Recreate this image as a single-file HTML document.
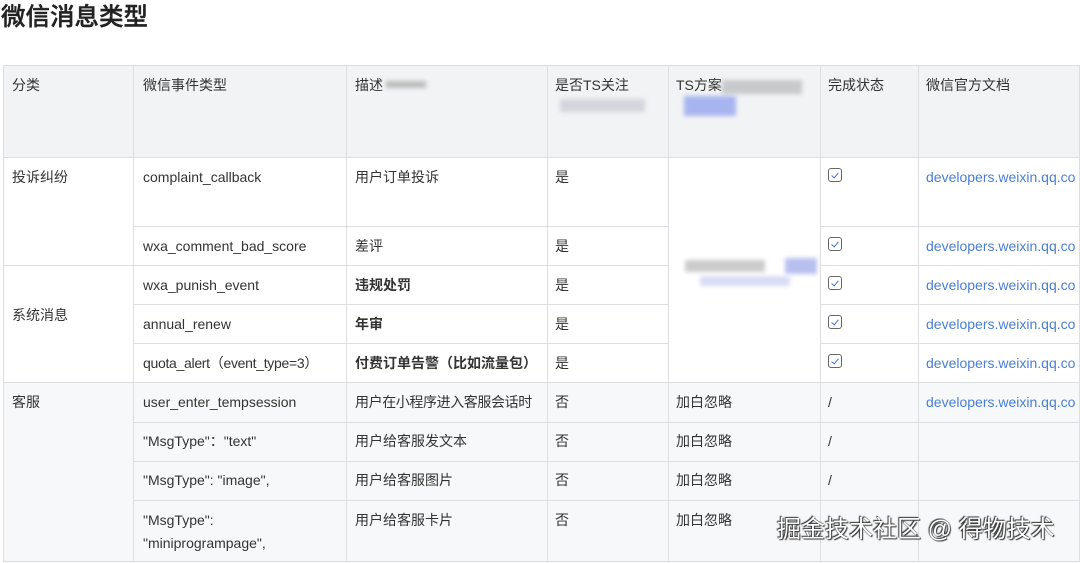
<!DOCTYPE html>
<html><head><meta charset="utf-8"><style>
body{margin:0;width:1080px;height:563px;overflow:hidden;background:#fff;font-family:"Liberation Sans","Noto Sans CJK SC",sans-serif;color:#333;position:relative}
.t{position:absolute;font-size:14px;line-height:16px;white-space:nowrap}
.b{font-weight:bold}
.l{color:#4a7fd4}
.bg{position:absolute}
.h{position:absolute;height:1px;background:#dcdee1}
.v{position:absolute;width:1px;background:#dcdee1}
.cb{position:absolute;width:12px;height:12px;border:1.3px solid #666;border-radius:3px}
.cb:after{content:"";position:absolute;left:3.5px;top:1.5px;width:3px;height:6px;border-right:1.5px solid #4a6fd0;border-bottom:1.5px solid #4a6fd0;transform:rotate(40deg)}
.blur{position:absolute;filter:blur(2px)}
</style></head><body>
<div class="t" style="left:1px;top:3px;font-size:24.5px;line-height:30px;color:#222;font-weight:500;-webkit-text-stroke:0.4px #222">微信消息类型</div>
<div class="bg" style="left:3px;top:65px;width:1076px;height:92px;background:#f2f3f5"></div>
<div class="bg" style="left:3px;top:382px;width:1076px;height:181px;background:#f7f8f9"></div>
<div class="bg" style="left:669px;top:158px;width:150px;height:224px;background:#fff"></div>
<div class="h" style="left:3px;top:65px;width:1076px"></div>
<div class="h" style="left:3px;top:157px;width:1076px"></div>
<div class="h" style="left:133px;top:226px;width:535px"></div><div class="h" style="left:820px;top:226px;width:259px"></div>
<div class="h" style="left:3px;top:265px;width:665px"></div><div class="h" style="left:820px;top:265px;width:259px"></div>
<div class="h" style="left:133px;top:304px;width:535px"></div><div class="h" style="left:820px;top:304px;width:259px"></div>
<div class="h" style="left:133px;top:343px;width:535px"></div><div class="h" style="left:820px;top:343px;width:259px"></div>
<div class="h" style="left:3px;top:382px;width:1076px"></div>
<div class="h" style="left:133px;top:422px;width:946px"></div>
<div class="h" style="left:133px;top:461px;width:946px"></div>
<div class="h" style="left:133px;top:500px;width:946px"></div>
<div class="h" style="left:3px;top:561px;width:1076px"></div>
<div class="v" style="left:3px;top:65px;height:497px"></div>
<div class="v" style="left:133px;top:65px;height:497px"></div>
<div class="v" style="left:346px;top:65px;height:497px"></div>
<div class="v" style="left:547px;top:65px;height:497px"></div>
<div class="v" style="left:668px;top:65px;height:497px"></div>
<div class="v" style="left:820px;top:65px;height:497px"></div>
<div class="v" style="left:918px;top:65px;height:497px"></div>
<div class="v" style="left:1079px;top:65px;height:497px"></div>
<div class="t" style="left:12px;top:77px">分类</div>
<div class="t" style="left:143px;top:77px">微信事件类型</div>
<div class="t" style="left:355px;top:77px">描述</div>
<div class="blur" style="left:386px;top:81px;width:40px;height:7px;background:#bbb"></div>
<div class="t" style="left:555px;top:77px">是否TS关注</div>
<div class="blur" style="left:560px;top:99px;width:85px;height:13px;background:#d4d5dc"></div>
<div class="t" style="left:676px;top:77px">TS方案</div>
<div class="blur" style="left:722px;top:80px;width:80px;height:14px;background:#c8c9cc"></div>
<div class="blur" style="left:684px;top:96px;width:52px;height:20px;background:#a8b4ef"></div>
<div class="t" style="left:828px;top:77px">完成状态</div>
<div class="t" style="left:926px;top:77px">微信官方文档</div>

<div class="t" style="left:12px;top:169px">投诉纠纷</div>
<div class="t" style="left:143px;top:169px">complaint_callback</div>
<div class="t" style="left:355px;top:169px">用户订单投诉</div>
<div class="t" style="left:555px;top:169px">是</div>
<div class="cb" style="left:828px;top:168px"></div>
<div class="t l" style="left:926px;top:169px">developers.weixin.qq.co</div>

<div class="t" style="left:143px;top:238px">wxa_comment_bad_score</div>
<div class="t" style="left:355px;top:238px">差评</div>
<div class="t" style="left:555px;top:238px">是</div>
<div class="cb" style="left:828px;top:237px"></div>
<div class="t l" style="left:926px;top:238px">developers.weixin.qq.co</div>

<div class="blur" style="left:685px;top:260px;width:80px;height:12px;background:#ccc"></div>
<div class="blur" style="left:785px;top:258px;width:32px;height:16px;background:#b8c0f0"></div>
<div class="blur" style="left:700px;top:276px;width:90px;height:10px;background:#d8dcf4"></div>

<div class="t" style="left:12px;top:307px">系统消息</div>
<div class="t" style="left:143px;top:277px">wxa_punish_event</div>
<div class="t b" style="left:355px;top:277px">违规处罚</div>
<div class="t" style="left:555px;top:277px">是</div>
<div class="cb" style="left:828px;top:276px"></div>
<div class="t l" style="left:926px;top:277px">developers.weixin.qq.co</div>

<div class="t" style="left:143px;top:316px">annual_renew</div>
<div class="t b" style="left:355px;top:316px">年审</div>
<div class="t" style="left:555px;top:316px">是</div>
<div class="cb" style="left:828px;top:315px"></div>
<div class="t l" style="left:926px;top:316px">developers.weixin.qq.co</div>

<div class="t" style="left:143px;top:355px;letter-spacing:-0.3px">quota_alert（event_type=3）</div>
<div class="t b" style="left:355px;top:355px">付费订单告警（比如流量包）</div>
<div class="t" style="left:555px;top:355px">是</div>
<div class="cb" style="left:828px;top:354px"></div>
<div class="t l" style="left:926px;top:355px">developers.weixin.qq.co</div>

<div class="t" style="left:12px;top:394px">客服</div>
<div class="t" style="left:143px;top:394px">user_enter_tempsession</div>
<div class="t" style="left:355px;top:394px;letter-spacing:-0.4px">用户在小程序进入客服会话时</div>
<div class="t" style="left:555px;top:394px">否</div>
<div class="t" style="left:676px;top:394px">加白忽略</div>
<div class="t" style="left:828px;top:394px">/</div>
<div class="t l" style="left:926px;top:394px">developers.weixin.qq.co</div>

<div class="t" style="left:143px;top:433px">"MsgType"："text"</div>
<div class="t" style="left:355px;top:433px">用户给客服发文本</div>
<div class="t" style="left:555px;top:433px">否</div>
<div class="t" style="left:676px;top:433px">加白忽略</div>
<div class="t" style="left:828px;top:433px">/</div>

<div class="t" style="left:143px;top:472px">"MsgType": "image",</div>
<div class="t" style="left:355px;top:472px">用户给客服图片</div>
<div class="t" style="left:555px;top:472px">否</div>
<div class="t" style="left:676px;top:472px">加白忽略</div>
<div class="t" style="left:828px;top:472px">/</div>

<div class="t" style="left:143px;top:512px">"MsgType":</div>
<div class="t" style="left:143px;top:535px">"miniprogrampage",</div>
<div class="t" style="left:355px;top:512px">用户给客服卡片</div>
<div class="t" style="left:555px;top:512px">否</div>
<div class="t" style="left:676px;top:512px">加白忽略</div>

<div class="t" style="left:777px;top:515px;font-size:24px;line-height:30px;color:#fff;text-shadow:0 0 1px #333,1px 1px 1px #333,-1px -1px 1px #333">掘金技术社区 @ 得物技术</div>
</body></html>
